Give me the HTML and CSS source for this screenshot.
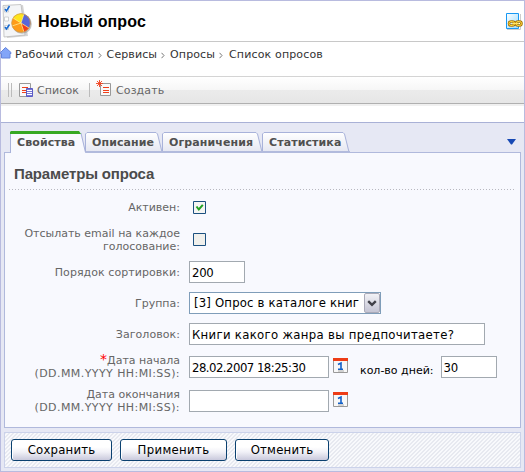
FILE: index.html
```html
<!DOCTYPE html>
<html lang="ru">
<head>
<meta charset="utf-8">
<title>Новый опрос</title>
<link rel="stylesheet" href="styles.css">
</head>
<body>
<div class="window">
  <header class="head">
    <svg class="poll-icon" width="32" height="36" viewBox="0 0 32 36">
      <path d="M3 4 21 2l5 31-21 2z" fill="#aaa" opacity=".5"/>
      <path d="M1 2.500 19 1.500 23 32 2 34z" fill="#f4f5f7" stroke="#bbb" stroke-width=".8"/>
      <g fill="#fff" stroke="#c4c8cc" stroke-width=".8"><path d="M2.500 4h4v5h-4zM2.500 14h4v4h-4zM2.500 22.500h4v4h-4z"/></g>
      <path d="m3 6 1.500 2L7.500 3M3 24l1.500 2 3-4.500" fill="none" stroke="#1668d0" stroke-width="1.500"/>
      <circle cx="20" cy="21" r="9.800" fill="#999" opacity=".6"/>
      <circle cx="19" cy="20" r="9.500" fill="#ff9c18"/>
      <path d="M19 20 11 15a9.500 9.500 0 0 1 11-4z" fill="#ffe51c"/>
      <path d="M19 20 22 11a9.500 9.500 0 0 1 5 14z" fill="#5967d8"/>
      <path d="m19 20 8 5a9.500 9.500 0 0 1-5 4z" fill="#f43b18"/>
      <path d="m11 15 8 5 3-9M19 20l8 5M19 20l3 9M19 20l-9 3" fill="none" stroke="#fff3a0" stroke-width=".7"/>
      <circle cx="19" cy="20" r="9.300" fill="none" stroke="#c99a50" stroke-width=".7"/>
    </svg>
    <h1><span>Новый опрос</span></h1>
    <svg class="link-icon" width="18" height="18" viewBox="0 0 18 18">
      <defs><linearGradient id="sky" x2="1" y2="1"><stop stop-color="#fff"/><stop offset="1" stop-color="#9adcff"/></linearGradient></defs>
      <path d="M2 17.500h13.500V2" fill="none" stroke="#ccc"/>
      <path d="M1.500 1.500h12v15h-12z" fill="url(#sky)" stroke="#1698f4"/>
      <rect x="4" y="9.500" width="5.500" height="4" rx="2" fill="none" stroke="#a87408" stroke-width="2.600"/>
      <rect x="11" y="9.500" width="5.500" height="4" rx="2" fill="none" stroke="#a87408" stroke-width="2.600"/>
      <rect x="4" y="9.500" width="5.500" height="4" rx="2" fill="none" stroke="#ffd83c"/>
      <rect x="11" y="9.500" width="5.500" height="4" rx="2" fill="none" stroke="#ffd83c"/>
      <path d="M7 11.500h7" stroke="#ffe468" stroke-width="1.200"/>
    </svg>
  </header>
  <nav class="crumbs">
    <svg class="home" width="12" height="12" viewBox="0 0 12 12"><path d="M.5 5.500 5.500.5 11 5.500v1H10v4.500H1.500V6.500H.5z" fill="#83a5f8" stroke="#6484dc"/></svg>
    <span class="c1">Рабочий стол</span><svg class="sep" width="4" height="7"><path d="m.5.800 2.500 2.700L.5 6.200" fill="none" stroke="#777"/></svg>
    <span class="c2">Сервисы</span><svg class="sep" width="4" height="7"><path d="m.5.800 2.500 2.700L.5 6.200" fill="none" stroke="#777"/></svg>
    <span class="c3">Опросы</span><svg class="sep" width="4" height="7"><path d="m.5.800 2.500 2.700L.5 6.200" fill="none" stroke="#777"/></svg>
    <span class="c4">Список опросов</span>
  </nav>
  <div class="toolbar">
    <i class="grip"></i>
    <svg class="list-icon" width="15" height="15" viewBox="0 0 15 15">
      <path d="M.5.500h11v13H.5z" fill="#fafafa" stroke="#999"/>
      <path d="M3 4.500h6M3 7.500h5M3 9.500h4" stroke="#f0401c" stroke-width="1.200"/>
      <path d="M7.500 5.500h6v8h-6z" fill="#7777d8" stroke="#5b5bc4"/><path d="M8 7.500h5M8 9.500h5M8 11.500h5" stroke="#fff"/>
    </svg>
    <span class="t1">Список</span>
    <i class="bar"></i>
    <svg class="new-icon" width="16" height="17" viewBox="0 0 16 17">
      <path d="M4.500 3.500h10v12h-10z" fill="#fafafa" stroke="#999"/>
      <path d="M7 7.500h6M7 10.500h6M7 12.500h6" stroke="#f0401c"/>
      <path d="M3.500 0v7M0 3.500h7M1 1l5 5M6 1 1 6" stroke="#f0401c" stroke-width=".9"/>
    </svg>
    <span class="t2">Создать</span>
  </div>
  <div class="space"></div>
  <main class="workspace">
    <svg width="0" height="0" class="defs"><defs><linearGradient id="tab" x2="0" y2="1"><stop stop-color="#fff"/><stop offset="1" stop-color="#e4e6f1"/></linearGradient></defs></svg>
    <div class="tabs">
      <div class="tab active">
        <svg width="77" height="22"><path d="M.5 22V1.500H70l5.500 20.500z" fill="#f8f9fe"/><path d="M.5 22V2M71 2l4.500 19.500" fill="none" stroke="#a8b2da"/><path d="M0 3V1l1-1h68l2 3z" fill="#36a822"/></svg>
        <span>Свойства</span>
      </div>
      <div class="tab t-desc">
        <svg width="78" height="22"><path d="M.5 21.500V3l1.500-1.500h69l1.500 1.500 4.500 18" fill="url(#tab)" stroke="#a8b2da"/><path d="M0 21h78" stroke="#b2bbdd" stroke-width="2"/></svg>
        <span>Описание</span>
      </div>
      <div class="tab t-lim">
        <svg width="101" height="22"><path d="M.5 21.500V3l1.500-1.500h92l1.500 1.500 4.500 18" fill="url(#tab)" stroke="#a8b2da"/><path d="M0 21h101" stroke="#b2bbdd" stroke-width="2"/></svg>
        <span>Ограничения</span>
      </div>
      <div class="tab t-stat">
        <svg width="88" height="22"><path d="M.5 21.500V3l1.500-1.500h79l1.500 1.500 4.500 18" fill="url(#tab)" stroke="#a8b2da"/><path d="M0 21h88" stroke="#b2bbdd" stroke-width="2"/></svg>
        <span>Статистика</span>
      </div>
      <svg class="menu-arrow" width="9" height="6"><path d="M0 0h9L5 5.500H4z" fill="#1749b4"/></svg>
    </div>
    <section class="panel">
      <h2><span>Параметры опроса</span></h2>
      <div class="row r1"><label><span>Активен:</span></label>
        <svg class="check" width="13" height="13"><path d="M.5.500h12v12H.5z" fill="#f5f5f3" stroke="#1c5180"/><path d="m3.500 5.500 2.300 3 4-4.700" fill="none" stroke="#21a121" stroke-width="2"/></svg></div>
      <div class="row r2"><label><span>Отсылать email на каждое</span><br><span>голосование:</span></label>
        <svg class="check" width="13" height="13"><path d="M.5.500h12v12H.5z" fill="#f0f0ec" stroke="#1c5180"/></svg></div>
      <div class="row r3"><label><span class="order">Порядок сортировки:</span></label><input class="num" value="200"></div>
      <div class="row r4"><label><span>Группа:</span></label>
        <div class="select"><span>[3] Опрос в каталоге книг</span><i><svg width="10" height="7"><path d="m1.200 1.200 3.800 3.600 3.800-3.600" fill="none" stroke="#414149" stroke-width="2.400"/></svg></i></div></div>
      <div class="row r5"><label><span class="order">Заголовок:</span></label><input class="title" value="Книги какого жанра вы предпочитаете?"></div>
      <div class="row r6"><label><b>*</b><span>Дата начала</span><br><span class="format">(DD.MM.YYYY HH:MI:SS):</span></label><input class="date" value="28.02.2007 18:25:30">
        <svg class="cal" width="15" height="15"><path d="M.5.500h14v14H.5z" fill="#f8f8f8" stroke="#999"/><path d="M0 0h15v3H0z" fill="#ed3c16"/><path d="M5 6.500 8 5v6.500M5 11.200h5" fill="none" stroke="#1260c8" stroke-width="1.600"/><path d="M5 13h6" stroke="#aaa"/></svg>
        <span class="days">кол-во дней:</span><input class="num" value="30"></div>
      <div class="row r7"><label><span>Дата окончания</span><br><span class="format">(DD.MM.YYYY HH:MI:SS):</span></label><input class="date" value="">
        <svg class="cal" width="15" height="15"><path d="M.5.500h14v14H.5z" fill="#f8f8f8" stroke="#999"/><path d="M0 0h15v3H0z" fill="#ed3c16"/><path d="M5 6.500 8 5v6.500M5 11.200h5" fill="none" stroke="#1260c8" stroke-width="1.600"/><path d="M5 13h6" stroke="#aaa"/></svg></div>
    </section>
    <footer class="actions">
      <button class="save">Сохранить</button><button class="apply">Применить</button><button class="cancel">Отменить</button>
    </footer>
  </main>
</div>
</body>
</html>
```
FILE: styles.css
```css
* { box-sizing: border-box; }
body { margin: 0; background: #fff; font: 11px/13px "DejaVu Sans", Verdana, sans-serif; }
svg { display: block; flex: none; }
span { white-space: nowrap; }
.window { width: 525px; height: 472px; border: 1px solid #b8bbdf; background: #fff; }

.head { display: flex; height: 41px; border-bottom: 1px solid #c8c8c8; }
.poll-icon { margin: 2px 0 0 1px; }
h1 { margin: 11px 0 0 4px; font: bold 16px/19px "Liberation Sans", Arial, sans-serif; letter-spacing: .1px; color: #000; }
.link-icon { margin: 11px 1px 0 auto; }

.crumbs { display: flex; align-items: center; height: 35px; padding-bottom: 9px; color: #333; letter-spacing: .1px; border-bottom: 1px solid #d4d4d4; }
.home { margin: -4px 2px 0 -1px; }
.crumbs .home + span { margin-left: 1px; }
.sep { margin: 1px 5px 0 4px; }
.crumbs .c4 { letter-spacing: .15px; margin-left: 1px; }

.toolbar { display: flex; align-items: center; height: 27px; color: #666; letter-spacing: .1px; border-bottom: 1px solid #b0b0b0; background: linear-gradient(#fff, #f6f6f6 13px, #ebebeb 13px, #e6e6e6); }
.grip { width: 4px; height: 14px; margin-left: 7px; border: solid #bbb; border-width: 0 1px; }
.list-icon { margin-left: 7px; }
.t1 { margin-left: 3px; }
.bar { width: 1px; height: 14px; margin-left: 10px; background: #bbb; }
.new-icon { margin: -4px 0 0 6px; }
.t2 { margin-left: 4px; }

.space { height: 18px; border-top: 2px solid #f0f0f0; }
.workspace { height: 349px; padding: 8px 3px 0; border-top: 1px solid #a9b1d6; background: #e6e8f4; }
.defs { height: 0; }

.tabs { display: flex; height: 22px; padding-left: 6px; margin-bottom: -1px; }
.tab { position: relative; z-index: 1; height: 22px; font-weight: bold; color: #505050; }
.tab svg { position: absolute; left: 0; top: 0; }
.tab span { position: relative; display: block; padding: 5px 0 0 7px; letter-spacing: .1px; }
.active { width: 75px; z-index: 2; }
.t-desc { width: 77px; }
.t-lim { width: 100px; }
.t-stat { width: 88px; }
.menu-arrow { margin: 8px 5px 0 auto; }

.panel { height: 276px; border: 1px solid #b0b9dc; background: #f8f9fe; }
h2 { height: 38px; margin: 0 4px; padding: 12px 0 0 5px; font: bold 15px/18px "Liberation Sans", Arial, sans-serif; letter-spacing: -.15px; color: #4b4b4b; background: repeating-linear-gradient(90deg, #b8b8c0 0 1px, transparent 1px 3px) left 36px / 507px 1px no-repeat; }
.row { display: flex; align-items: center; color: #666; }
.row label { width: 175px; margin-right: 9px; text-align: right; }
.row b { color: #f00; font-weight: normal; font-size: 14px; line-height: 10px; }
.order { letter-spacing: .06px; }
.format { letter-spacing: .42px; }
.r1 { height: 33px; }
.r2 { height: 31px; }
.r3 { height: 34px; }
.r4 { height: 28px; }
.r5 { height: 34px; }
.r6 { height: 32px; }
.r7 { height: 36px; }
.check { margin-left: 4px; }
input { height: 22px; padding: 0 2px; border: 1px solid #a2a9b0; background: #fff; color: #000; font: 13px/18px "DejaVu Sans Condensed", Tahoma, sans-serif; border-radius: 0; outline: 0; }
.num { width: 56px; letter-spacing: -.3px; }
.title { width: 296px; letter-spacing: .31px; }
.date { width: 140px; letter-spacing: -.52px; }
.select { display: flex; align-items: center; width: 192px; height: 22px; padding-left: 4px; border: 1px solid #7f9db9; background: #fff; color: #000; font: 13px/18px "DejaVu Sans Condensed", Tahoma, sans-serif; letter-spacing: .17px; }
.select i { display: flex; align-items: center; justify-content: center; width: 16px; height: 20px; margin-left: auto; border: 1px solid #aaaab8; border-radius: 2px; background: linear-gradient(#f2f2f6, #c5c5d4); }
.cal { margin: -3px 0 0 4px; }
.days { margin: 6px 7px 0 12px; color: #000; }

.actions { display: flex; gap: 8px; height: 36px; margin-top: 4px; padding: 6px 0 0 6px; border: 1px solid #cbd2ea; background: repeating-linear-gradient(135deg, #e7e9f0 0 1.414px, #f8f9fc 1.414px 2.828px); }
button { height: 22px; padding: 0; border: 1px solid #0b4170; border-radius: 3px; background: linear-gradient(#fff 35%, #f1f1f7 60%, #c9c9dc); color: #000; font: 13px/18px "DejaVu Sans Condensed", Tahoma, sans-serif; letter-spacing: .2px; box-shadow: inset 1px 0 #fff; }
.save { width: 101px; }
.apply { width: 107px; letter-spacing: .35px; }
.cancel { width: 94px; }
```
